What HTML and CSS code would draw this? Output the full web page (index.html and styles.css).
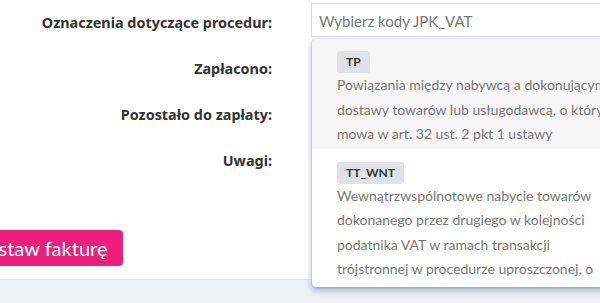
FILE: index.html
```html
<!DOCTYPE html>
<html>
<head>
    <title>Wystaw fakturę</title>
    <link rel="stylesheet" href="styles.css">
</head>
<body>
    <div class="page">
        <div class="form">
            <div class="row">
                <label class="label">Oznaczenia dotyczące procedur:</label>
                <div class="field">
                    <div class="select">
                        <div class="select-input">Wybierz kody JPK_VAT</div>
                        <div class="dropdown">
                            <div class="option active">
                                <span class="code">TP</span>
                                <div class="desc">Powiązania między nabywcą a dokonującym dostawy towarów lub usługodawcą, o których mowa w art. 32 ust. 2 pkt 1 ustawy</div>
                            </div>
                            <div class="option">
                                <span class="code">TT_WNT</span>
                                <div class="desc">Wewnątrzwspólnotowe nabycie towarów dokonanego przez drugiego w kolejności podatnika VAT w ramach transakcji trójstronnej w procedurze uproszczonej, o której mowa w dziale XII rozdziale 8 ustawy</div>
                            </div>
                        </div>
                    </div>
                </div>
            </div>
            <div class="row">
                <label class="label">Zapłacono:</label>
                <div class="field"></div>
            </div>
            <div class="row">
                <label class="label">Pozostało do zapłaty:</label>
                <div class="field"></div>
            </div>
            <div class="row">
                <label class="label">Uwagi:</label>
                <div class="field"></div>
            </div>
        </div>
        <div class="actions">
            <button class="btn">Wystaw fakturę</button>
        </div>
    </div>
    <div class="footer"></div>
</body>
</html>
```

FILE: styles.css
```css
body {
    margin: 0;
    width: 600px;
    height: 303px;
    overflow: hidden;
    font-family: Lato, "Noto Sans", sans-serif;
    background-color: #fff;
    color: #333;
}

.page {
    height: 280px;
    border-bottom: 1px solid #e3e5ec;
    box-sizing: border-box;
}

.form {
    display: flex;
    flex-direction: column;
}

.row {
    display: flex;
    height: 46px;
}

.label {
    width: 272px;
    flex: none;
    text-align: right;
    font-family: "Noto Sans", sans-serif;
    font-weight: bold;
    font-size: 14.4px;
    line-height: 20px;
    padding-top: 13px;
    color: #333;
}

.field {
    flex: 1;
    margin-left: 39px;
    min-width: 0;
}

.select {
    position: relative;
    margin-top: 3px;
}

.select-input {
    height: 34px;
    box-sizing: border-box;
    border: 1px solid #ddd;
    border-right: none;
    padding: 7px 7px 5px;
    font-size: 15px;
    line-height: 20px;
    color: #777;
}

.dropdown {
    position: absolute;
    top: 36px;
    left: 1px;
    width: 320px;
    height: 248px;
    overflow: hidden;
    background: #fff;
    border-radius: 4px;
    box-shadow: 0 3px 6px rgba(70, 75, 130, 0.45), 0 0 2px rgba(70, 75, 130, 0.4);
    z-index: 2;
}

.option {
    padding: 11px 12px 0 25px;
}

.option.active {
    background-color: #f6f6f6;
    padding-bottom: 2px;
}

.option + .option {
    padding-top: 12px;
}

.code {
    display: inline-block;
    background-color: #e1e2e7;
    border-radius: 3px;
    padding: 0 9px;
    font-size: 12px;
    font-weight: bold;
    line-height: 22px;
    color: #333;
}

.desc {
    font-size: 14px;
    line-height: 24.5px;
    color: #777;
    width: 287px;
}

.actions {
    padding-top: 46px;
}

.btn {
    margin-left: -45px;
    height: 36px;
    background-color: #ec1f7d;
    color: #fff;
    border: none;
    border-radius: 4px;
    padding: 0 16px 0 13px;
    font-family: inherit;
    font-size: 20px;
}

.footer {
    height: 23px;
    background-color: #eef0f5;
}
```
